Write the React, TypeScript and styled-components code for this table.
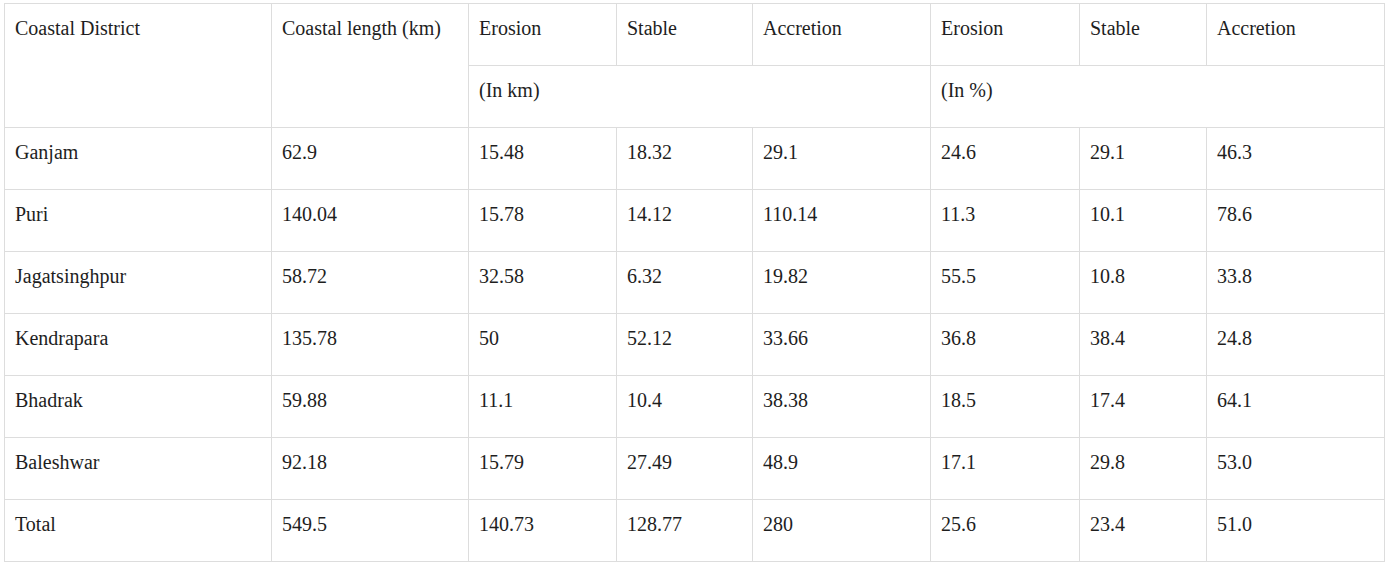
import React from "react";
import styled, { createGlobalStyle } from "styled-components";

const Global = createGlobalStyle`
  html, body { margin: 0; padding: 0; background: #fff; }
  body { font-family: "Liberation Serif", "Times New Roman", serif; }
`;

const Page = styled.div`
  padding: 3px 4px;
`;

const Table = styled.table`
  border-collapse: collapse;
  table-layout: fixed;
  width: 1381px;
  font-family: "Liberation Serif", "Times New Roman", serif;
  font-size: 20px;
  color: #1e1e1e;
`;

const Cell = styled.td`
  border: 1px solid #dddddd;
  padding: 9px 10px 22px;
  line-height: 30px;
  vertical-align: top;
  text-align: left;
  font-weight: normal;
  white-space: nowrap;
`;

const widths = [267, 197, 148, 136, 178, 149, 127, 178];

type Row = [string, string, string, string, string, string, string, string];

const rows: Row[] = [
  ["Ganjam", "62.9", "15.48", "18.32", "29.1", "24.6", "29.1", "46.3"],
  ["Puri", "140.04", "15.78", "14.12", "110.14", "11.3", "10.1", "78.6"],
  ["Jagatsinghpur", "58.72", "32.58", "6.32", "19.82", "55.5", "10.8", "33.8"],
  ["Kendrapara", "135.78", "50", "52.12", "33.66", "36.8", "38.4", "24.8"],
  ["Bhadrak", "59.88", "11.1", "10.4", "38.38", "18.5", "17.4", "64.1"],
  ["Baleshwar", "92.18", "15.79", "27.49", "48.9", "17.1", "29.8", "53.0"],
  ["Total", "549.5", "140.73", "128.77", "280", "25.6", "23.4", "51.0"],
];

export default function App() {
  return (
    <Page>
      <Global />
      <Table>
        <colgroup>
          {widths.map((w, i) => (
            <col key={i} style={{ width: w }} />
          ))}
        </colgroup>
        <tbody>
          <tr>
            <Cell rowSpan={2}>Coastal District</Cell>
            <Cell rowSpan={2}>Coastal length (km)</Cell>
            <Cell>Erosion</Cell>
            <Cell>Stable</Cell>
            <Cell>Accretion</Cell>
            <Cell>Erosion</Cell>
            <Cell>Stable</Cell>
            <Cell>Accretion</Cell>
          </tr>
          <tr>
            <Cell colSpan={3}>(In km)</Cell>
            <Cell colSpan={3}>(In %)</Cell>
          </tr>
          {rows.map((r) => (
            <tr key={r[0]}>
              {r.map((v, i) => (
                <Cell key={i}>{v}</Cell>
              ))}
            </tr>
          ))}
        </tbody>
      </Table>
    </Page>
  );
}
